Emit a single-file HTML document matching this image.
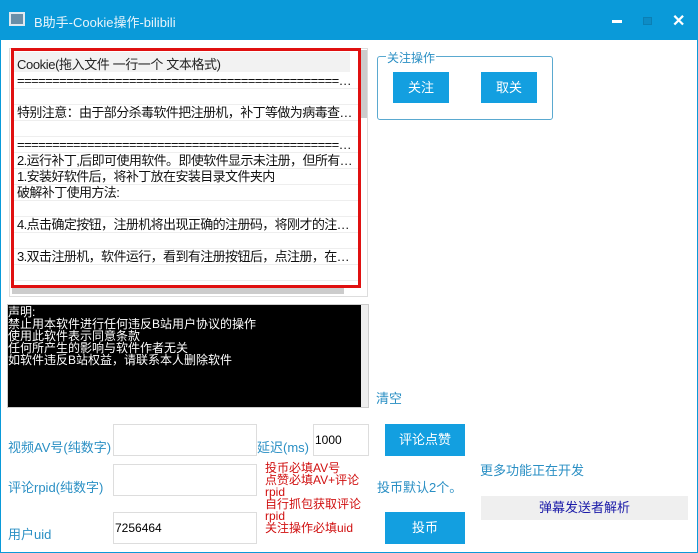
<!DOCTYPE html>
<html><head><meta charset="utf-8"><style>
*{margin:0;padding:0;box-sizing:border-box}
body{width:698px;height:553px;overflow:hidden;background:#fff;font-family:"Liberation Sans","Noto Sans CJK SC","WenQuanYi Zen Hei",sans-serif;font-size:12px;position:relative}
.a{position:absolute;white-space:nowrap}
.tb{left:0;top:0;width:698px;height:40px;background:#0a9ad9}
.frame{left:0;top:40px;width:698px;height:513px;border:1px solid #0a9ad9;border-top:none}
.row{position:absolute;left:14px;width:344px;height:16px;line-height:16px;border-bottom:1px solid #eee;color:#111;font-size:13px;overflow:hidden;padding-left:3px;padding-right:2px;letter-spacing:-0.6px;white-space:nowrap;text-overflow:ellipsis}
.btn{background:#139fe0;color:#fff;text-align:center;font-size:13px}
.inp{border:1px solid #ddd;background:#fff}
.lbl{color:#2a8fc4;font-size:13px}
.red{color:#d01010;font-size:12px;line-height:12px}
</style></head><body>
<div class="a tb"></div>
<div class="a frame"></div>
<div class="a" style="left:9px;top:12px;width:16px;height:14px;border:2px solid #dfe9f0;background:#6a8fa8"></div>
<div class="a" style="left:34px;top:12px;color:#e8f4fb;font-size:13px">B助手-Cookie操作-bilibili</div>
<div class="a" style="left:612px;top:20px;width:10px;height:3px;background:#fff"></div>
<div class="a" style="left:643px;top:17px;width:9px;height:8px;border:1px solid #0b7fb4;background:#0d8cc6"></div>
<div class="a" style="left:672px;top:11px;color:#fff;font-size:16px;font-weight:bold">✕</div>
<div class="a" style="left:9px;top:48px;width:359px;height:249px;border:1px solid #ddd"></div>
<div class="a" style="left:14px;top:52px;width:336px;height:20px;background:#f2f2f2"></div>
<div class="a" style="left:17px;top:54px;font-size:13px;color:#222;letter-spacing:-0.4px">Cookie(拖入文件 一行一个 文本格式)</div>
<div class="row" style="top:73px">========================================================================</div>
<div class="row" style="top:89px"></div>
<div class="row" style="top:105px">特别注意：由于部分杀毒软件把注册机，补丁等做为病毒查杀，请关闭</div>
<div class="row" style="top:121px"></div>
<div class="row" style="top:137px">========================================================================</div>
<div class="row" style="top:153px">2.运行补丁,后即可使用软件。即使软件显示未注册，但所有功能可用</div>
<div class="row" style="top:169px">1.安装好软件后，将补丁放在安装目录文件夹内</div>
<div class="row" style="top:185px">破解补丁使用方法:</div>
<div class="row" style="top:201px"></div>
<div class="row" style="top:217px">4.点击确定按钮，注册机将出现正确的注册码，将刚才的注册码复制</div>
<div class="row" style="top:233px"></div>
<div class="row" style="top:249px">3.双击注册机，软件运行，看到有注册按钮后，点注册，在注册界面</div>
<div class="row" style="top:265px"></div>
<div class="a" style="left:361px;top:50px;width:6px;height:68px;background:#ccc"></div>
<div class="a" style="left:12px;top:287px;width:332px;height:7px;background:#ccc"></div>
<div class="a" style="left:11px;top:48px;width:350px;height:240px;border:3px solid #e01010"></div>
<div class="a" style="left:377px;top:56px;width:176px;height:64px;border:1px solid #5aa9d0;border-radius:3px"></div>
<div class="a" style="left:386px;top:49px;background:#fff;padding:0 1px;color:#2a8fc4;font-size:12px">关注操作</div>
<div class="a btn" style="left:393px;top:72px;width:56px;height:31px;line-height:31px">关注</div>
<div class="a btn" style="left:481px;top:72px;width:56px;height:31px;line-height:31px">取关</div>
<div class="a" style="left:7px;top:304px;width:362px;height:104px;background:#000;border:1px solid #ccc"></div>
<div class="a" style="left:361px;top:305px;width:7px;height:102px;background:#eee"></div>
<div class="a" style="left:8px;top:306px;color:#fff;font-size:12px;line-height:12px">声明:<br>禁止用本软件进行任何违反B站用户协议的操作<br>使用此软件表示同意条款<br>任何所产生的影响与软件作者无关<br>如软件违反B站权益，请联系本人删除软件</div>
<div class="a lbl" style="left:376px;top:388px">清空</div>
<div class="a lbl" style="left:8px;top:437px">视频AV号(纯数字)</div>
<div class="a lbl" style="left:8px;top:477px">评论rpid(纯数字)</div>
<div class="a lbl" style="left:8px;top:524px">用户uid</div>
<div class="a inp" style="left:113px;top:424px;width:144px;height:32px"></div>
<div class="a inp" style="left:113px;top:464px;width:144px;height:32px"></div>
<div class="a inp" style="left:113px;top:512px;width:144px;height:32px"></div>
<div class="a" style="left:115px;top:521px;font-size:12px">7256464</div>
<div class="a lbl" style="left:257px;top:437px">延迟(ms)</div>
<div class="a inp" style="left:313px;top:424px;width:56px;height:32px"></div>
<div class="a" style="left:315px;top:433px;font-size:12px">1000</div>
<div class="a btn" style="left:385px;top:424px;width:80px;height:32px;line-height:32px">评论点赞</div>
<div class="a btn" style="left:385px;top:512px;width:80px;height:32px;line-height:32px">投币</div>
<div class="a red" style="left:265px;top:462px">投币必填AV号<br>点赞必填AV+评论<br>rpid<br>自行抓包获取评论<br>rpid<br>关注操作必填uid</div>
<div class="a lbl" style="left:377px;top:477px">投币默认2个。</div>
<div class="a lbl" style="left:480px;top:460px">更多功能正在开发</div>
<div class="a" style="left:481px;top:496px;width:207px;height:24px;background:#efefef;color:#1a1aa8;text-align:center;line-height:24px;font-size:13px">弹幕发送者解析</div>
</body></html>
